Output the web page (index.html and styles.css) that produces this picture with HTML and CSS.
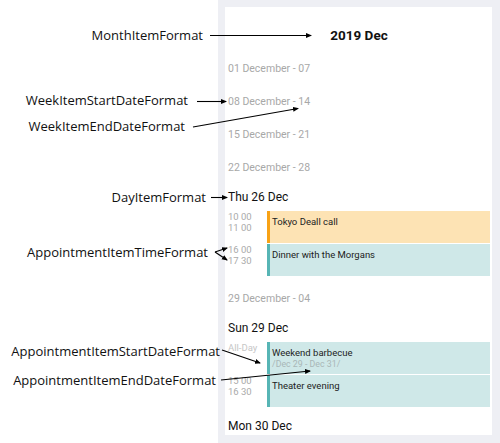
FILE: index.html
```html
<!DOCTYPE html>
<html>
<head>
<meta charset="utf-8">
<link rel="stylesheet" href="styles.css">
</head>
<body>
<div class="page">
  <div class="gutter"></div>
  <div class="frame">
    <div class="panel">
      <div class="month">2019 Dec</div>
      <div class="week">01 December - 07</div>
      <div class="week">08 December - 14</div>
      <div class="week">15 December - 21</div>
      <div class="week">22 December - 28</div>
      <div class="day">Thu 26 Dec</div>
      <div class="appts">
        <div class="appt">
          <div class="times"><span>10 00</span><span>11 00</span></div>
          <div class="block orange"><div class="title">Tokyo Deall call</div></div>
        </div>
        <div class="appt">
          <div class="times"><span>16 00</span><span>17 30</span></div>
          <div class="block teal"><div class="title">Dinner with the Morgans</div></div>
        </div>
      </div>
      <div class="week">29 December - 04</div>
      <div class="day">Sun 29 Dec</div>
      <div class="appts">
        <div class="appt">
          <div class="times"><span class="allday">All-Day</span></div>
          <div class="block teal"><div class="title">Weekend barbecue</div><div class="range">/Dec 29 - Dec 31/</div></div>
        </div>
        <div class="appt">
          <div class="times"><span>15 00</span><span>16 30</span></div>
          <div class="block teal"><div class="title">Theater evening</div></div>
        </div>
      </div>
      <div class="day">Mon 30 Dec</div>
    </div>
  </div>

  <div class="note n-month">MonthItemFormat</div>
  <div class="note n-wstart">WeekItemStartDateFormat</div>
  <div class="note n-wend">WeekItemEndDateFormat</div>
  <div class="note n-day">DayItemFormat</div>
  <div class="note n-time">AppointmentItemTimeFormat</div>
  <div class="note n-astart">AppointmentItemStartDateFormat</div>
  <div class="note n-aend">AppointmentItemEndDateFormat</div>

  <svg class="arrows" width="500" height="443" viewBox="0 0 500 443">
    <defs>
      <marker id="ah" markerWidth="6" markerHeight="6" refX="5" refY="3" orient="auto" markerUnits="userSpaceOnUse">
        <path d="M0,0.5 L6,3 L0,5.5 Z" fill="#000"/>
      </marker>
    </defs>
    <g stroke="#000" stroke-width="1.1" fill="none" marker-end="url(#ah)">
      <line x1="210" y1="35.5" x2="311" y2="35.5"/>
      <line x1="197" y1="101.5" x2="226" y2="101.5"/>
      <line x1="193" y1="127" x2="298" y2="108.5"/>
      <line x1="211" y1="197.5" x2="227" y2="197.5"/>
      <line x1="215" y1="252" x2="227" y2="248"/>
      <line x1="215" y1="252" x2="227" y2="260"/>
      <line x1="222" y1="350" x2="260" y2="363"/>
      <line x1="221" y1="380" x2="310" y2="371"/>
    </g>
  </svg>
</div>
</body>
</html>
```

FILE: styles.css
```css
* { box-sizing: border-box; }
html, body { margin: 0; padding: 0; background: #fff; }
.page {
  position: relative;
  width: 500px;
  height: 443px;
  display: flex;
  overflow: hidden;
}
.gutter { width: 218px; flex: none; }
.frame {
  width: 282px;
  height: 443px;
  background: #eeeff4;
  padding: 7px 8px 8px 7px;
}
.panel {
  background: #fff;
  height: 428px;
  overflow: hidden;
  padding: 0 2px 0 3px;
  font-family: Roboto, "Liberation Sans", sans-serif;
}
.month {
  height: 45px;
  padding-top: 16px;
  line-height: 24px;
  text-align: center;
  font-weight: bold;
  font-size: 13.5px;
  color: #111;
}
.week {
  height: 33px;
  line-height: 33px;
  font-size: 10.5px;
  color: #a8a8a8;
}
.day {
  height: 27px;
  line-height: 27px;
  font-size: 12px;
  color: #111;
}
.appts {
  display: flex;
  flex-direction: column;
  gap: 1px;
  margin-bottom: 6px;
}
.appt { display: flex; height: 32px; }
.times {
  width: 39px;
  flex: none;
  display: flex;
  flex-direction: column;
  font-size: 9.5px;
  line-height: 11px;
  color: #aaa;
}
.allday { color: #c6c6c6; }
.block {
  flex: 1;
  border-left: 3px solid;
  padding: 5px 4px 0 2px;
  font-size: 9.5px;
  line-height: 11px;
}
.orange { background: #fde3b4; border-color: #f8a216; }
.teal { background: #cfe8e8; border-color: #57b5b5; }
.title { color: #222; line-height: 12px; }
.range { color: #a9b7b7; font-size: 8.8px; line-height: 10px; }

.note {
  position: absolute;
  font-family: "Open Sans", "Noto Sans", sans-serif;
  font-size: 13px;
  line-height: 18px;
  color: #111;
  white-space: nowrap;
  text-align: right;
}
.n-month { right: 297px; top: 26px; }
.n-wstart { right: 312px; top: 91px; }
.n-wend { right: 315px; top: 117px; }
.n-day { right: 294px; top: 188px; }
.n-time { right: 292px; top: 243px; }
.n-astart { right: 280px; top: 342px; }
.n-aend { right: 284px; top: 371px; }
.arrows { position: absolute; left: 0; top: 0; pointer-events: none; }
```
